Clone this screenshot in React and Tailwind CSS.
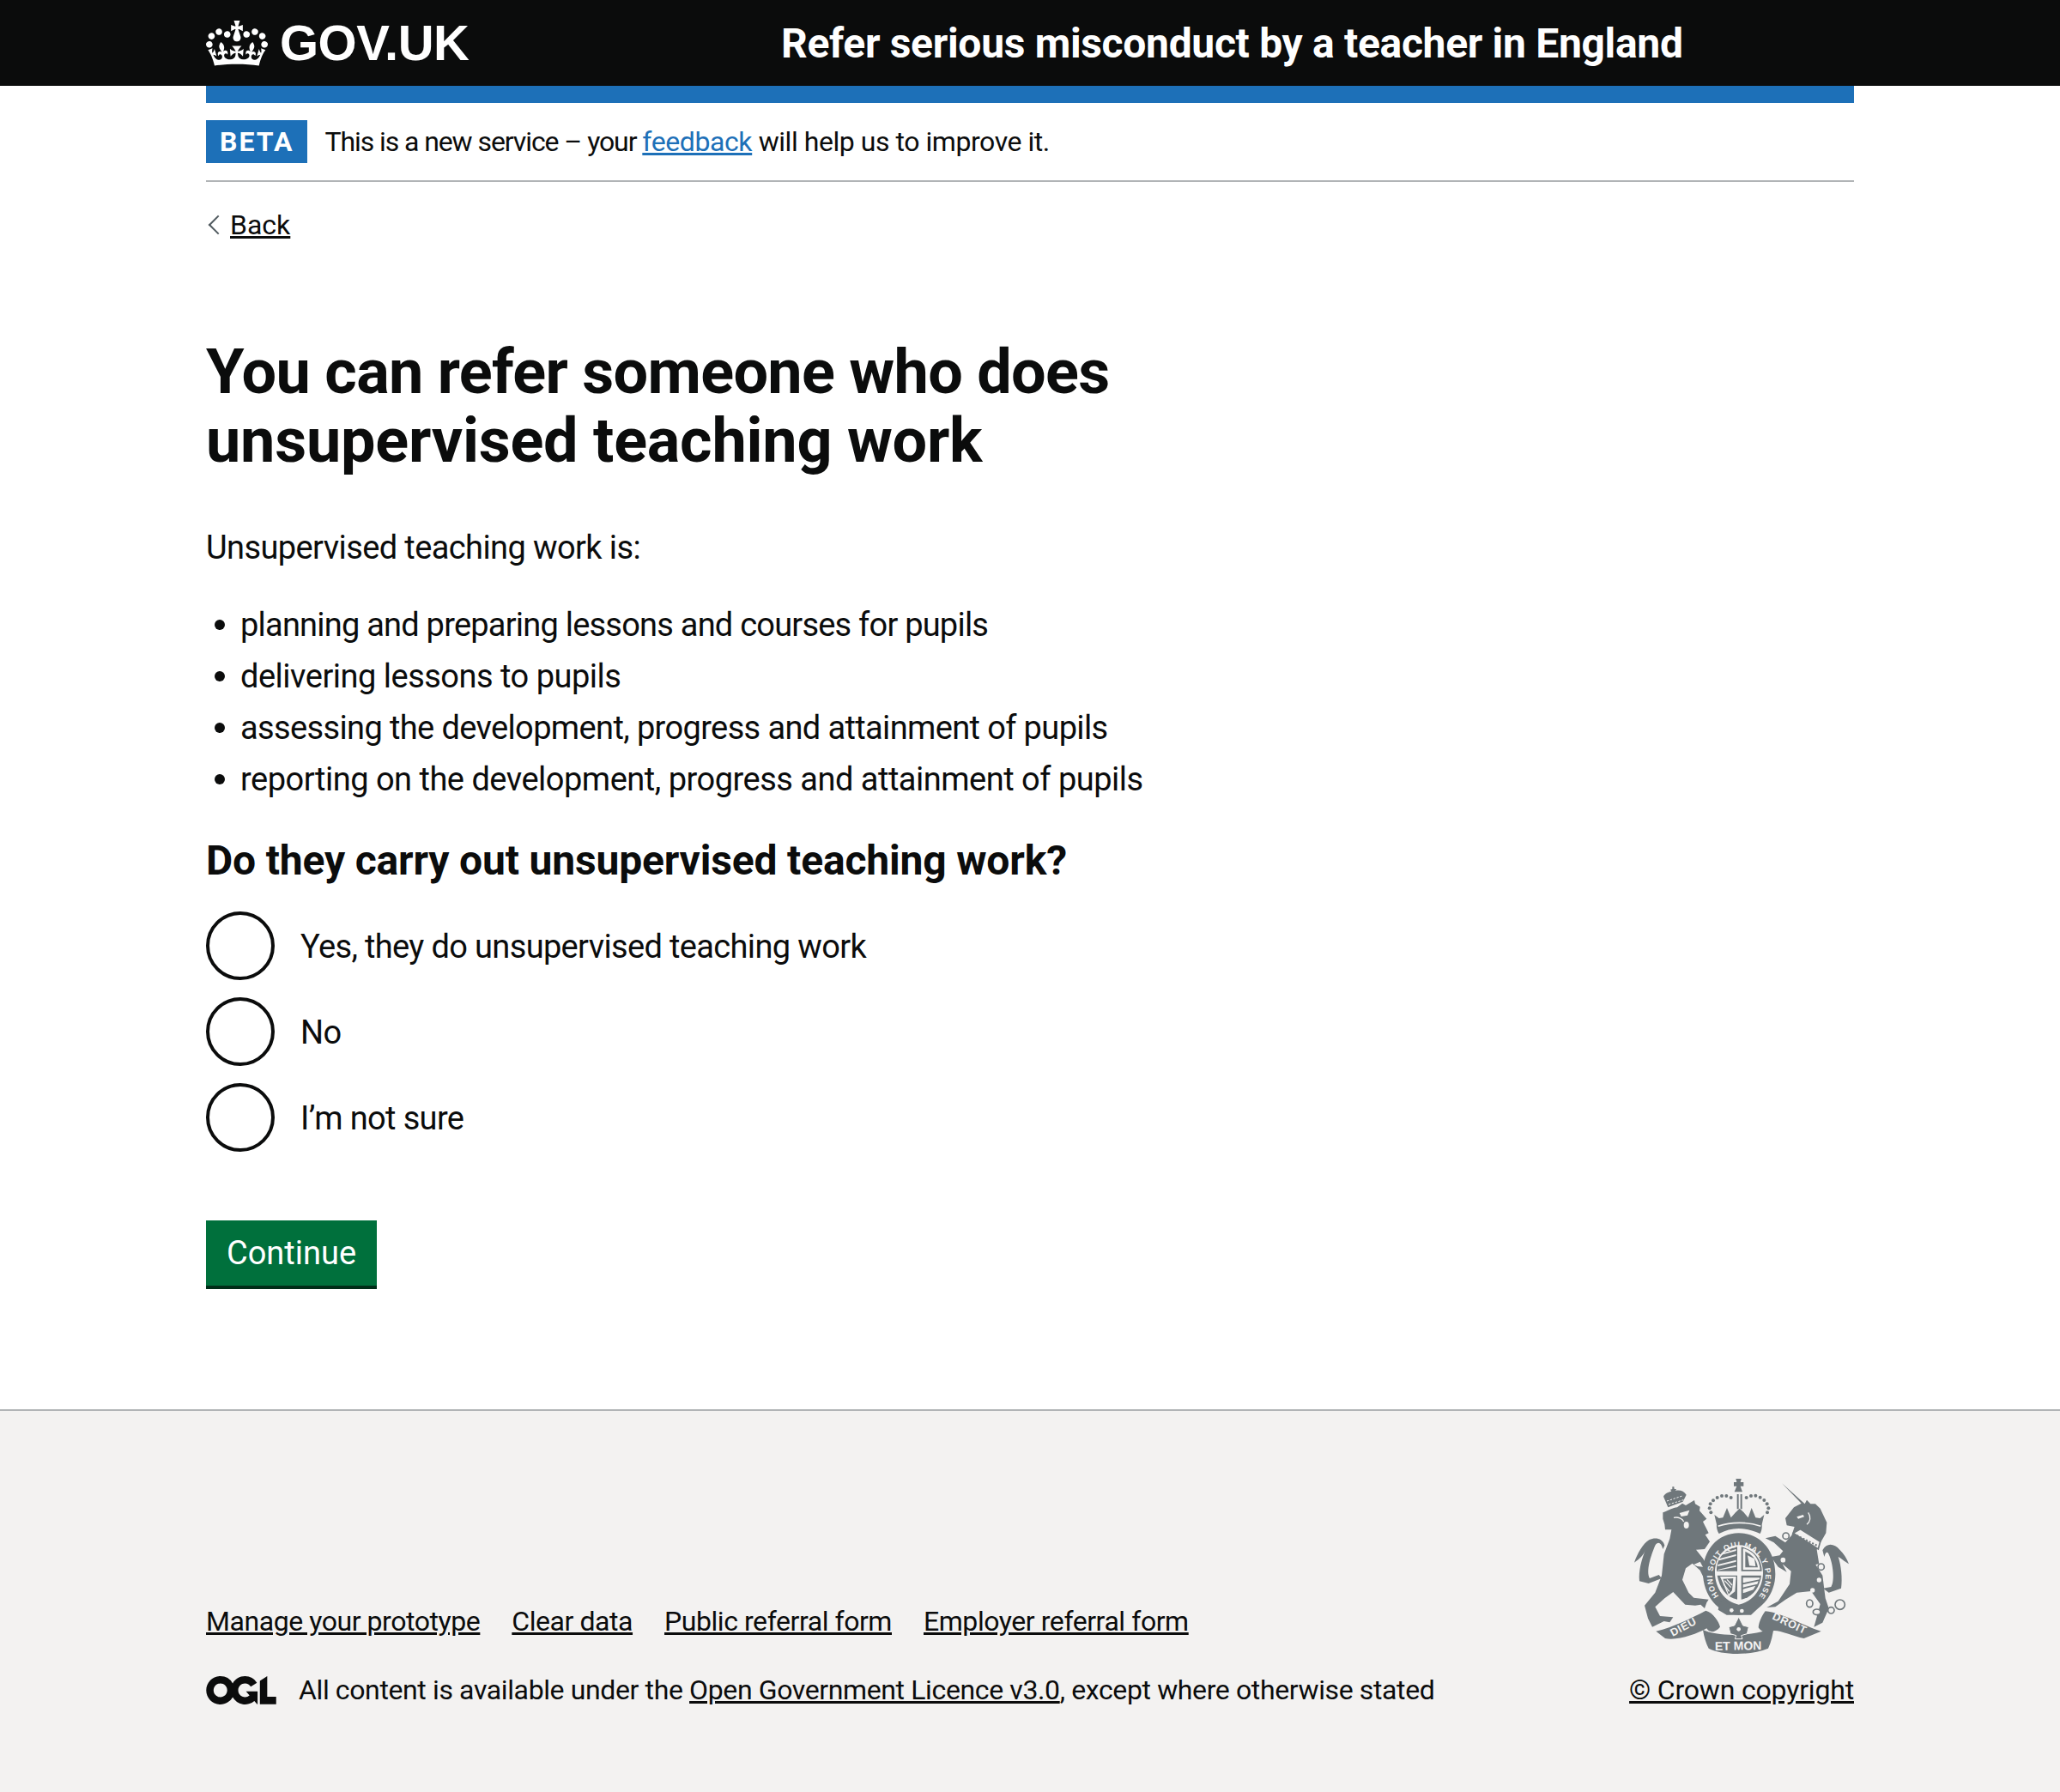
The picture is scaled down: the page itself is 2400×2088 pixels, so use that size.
const sans = "font-['Roboto',sans-serif]";

function Crown({ className }) {
  return (
    <svg viewBox="0 0 132 97" className={className} fill="currentColor">
      <path d="M25 30.2c3.5 1.5 7.7-.2 9.1-3.7 1.5-3.6-.2-7.8-3.9-9.2-3.6-1.4-7.6.3-9.1 3.9-1.4 3.5.3 7.5 3.9 9zM9 39.5c3.6 1.5 7.8-.2 9.2-3.7 1.5-3.6-.2-7.8-3.9-9.1-3.6-1.5-7.6.2-9.1 3.8-1.4 3.5.3 7.5 3.8 9zM4.4 57.2c3.5 1.5 7.7-.2 9.1-3.8 1.5-3.6-.2-7.7-3.9-9.1-3.5-1.5-7.6.3-9.1 3.8-1.4 3.5.3 7.6 3.9 9.1zm38.3-21.4c3.5 1.5 7.7-.2 9.1-3.8 1.5-3.6-.2-7.7-3.9-9.1-3.6-1.5-7.6.3-9.1 3.8-1.3 3.6.4 7.7 3.9 9.1zm64.4-5.6c-3.6 1.5-7.8-.2-9.1-3.7-1.5-3.6.2-7.8 3.8-9.2 3.6-1.4 7.7.3 9.2 3.9 1.3 3.5-.4 7.5-3.9 9zm15.9 9.3c-3.6 1.5-7.7-.2-9.1-3.7-1.5-3.6.2-7.8 3.7-9.1 3.6-1.5 7.7.2 9.2 3.8 1.5 3.5-.3 7.5-3.8 9zm4.7 17.7c-3.6 1.5-7.8-.2-9.2-3.8-1.5-3.6.2-7.7 3.9-9.1 3.6-1.5 7.7.3 9.2 3.8 1.3 3.5-.4 7.6-3.9 9.1zM89.3 35.8c-3.6 1.5-7.8-.2-9.2-3.8-1.4-3.6.2-7.7 3.9-9.1 3.6-1.5 7.7.3 9.2 3.8 1.4 3.6-.3 7.7-3.9 9.1zM69.7 17.7l8.9 4.7V9.3l-8.9 2.8c-.2-.3-.5-.6-.9-.9L72.4 0H59.6l3.6 11.2c-.3.3-.6.5-.9.9l-8.8-2.8v13.1l8.8-4.7c.3.3.6.7.9.9l-5 15.4v.1c-.2.8-.4 1.6-.4 2.4 0 4.1 3.1 7.5 7 8.1h.2c.3 0 .7.1 1 .1.4 0 .7 0 1-.1h.2c4-.6 7.1-4.1 7.1-8.1 0-.8-.1-1.7-.4-2.4V34l-5.1-15.4c.4-.2.7-.6 1-.9zM66 92.8c16.9 0 32.8 1.1 47.1 3.2 4-16.9 8.9-26.7 14-33.5l-9.6-3.4c1 4.9 1.1 7.2 0 10.2-1.5-1.4-3-4.3-4.2-8.7L108.6 76c2.8-2 5-3.2 7.5-3.3-4.4 9.4-10 11.9-13.6 11.2-4.3-.8-6.3-4.6-5.6-7.9 1-4.7 5.7-5.9 8-.5 4.3-8.7-3-11.4-7.6-8.8 7.1-7.2 7.9-13.5 2.1-21.1-8 6.1-8.1 12.3-4.5 20.8-4.7-5.4-12.1-2.5-9.5 6.2 3.4-5.2 7.9-2 7.2 3.1-.6 4.3-6.4 7.8-13.5 7.2-10.3-.9-10.9-8-11.2-13.8 2.5-.5 7.1 1.8 11 7.3L80.2 60c-4.1 4.4-8 5.3-12.3 5.4 1.4-4.4 8-11.6 8-11.6H55.5s6.4 7.2 7.9 11.6c-4.2-.1-8-1-12.3-5.4l1.4 16.4c3.9-5.5 8.5-7.7 10.9-7.3-.3 5.8-.9 12.8-11.1 13.8-7.2.6-12.9-2.9-13.5-7.2-.7-5 3.8-8.3 7.1-3.1 2.7-8.7-4.6-11.6-9.4-6.2 3.7-8.5 3.6-14.7-4.6-20.8-5.8 7.6-5 13.9 2.2 21.1-4.7-2.6-11.9.1-7.7 8.8 2.3-5.5 7.1-4.2 8.1.5.7 3.3-1.3 7.1-5.7 7.9-3.5.7-9-1.8-13.5-11.2 2.5.1 4.7 1.3 7.5 3.3l-4.7-15.4c-1.2 4.4-2.7 7.2-4.3 8.7-1.1-3-.9-5.3 0-10.2l-9.5 3.4c5 6.9 9.9 16.7 14 33.5 14.8-2.1 30.8-3.2 47.7-3.2z" />
    </svg>
  );
}

function Ogl({ className }) {
  return (
    <svg viewBox="0 0 483.2 195.7" className={className} fill="currentColor">
      <path d="M421.5 142.8V.1l-50.7 32.3v161.1h112.4v-50.7zm-122.3-9.6A47.12 47.12 0 0 1 221 97.8c0-26 21.1-47.1 47.1-47.1 16.7 0 31.4 8.7 39.7 21.8l42.7-27.2A97.63 97.63 0 0 0 268.1 0c-36.5 0-68.3 20.1-85.1 49.7A98 98 0 0 0 97.8 0C43.9 0 0 43.9 0 97.8s43.9 97.8 97.8 97.8c36.5 0 68.3-20.1 85.1-49.7a97.76 97.76 0 0 0 149.6 25.4l19.4 22.2h3v-87.8h-80l24.3 27.5zM97.8 145c-26 0-47.1-21.1-47.1-47.1s21.1-47.1 47.1-47.1 47.2 21 47.2 47S123.8 145 97.8 145" />
    </svg>
  );
}

// royal arms, traced by eye in the coordinates of the 3x crop
function Crest({ className }) {
  const dots = [
    [400, 190], [395, 175], [398, 160], [408, 148], [422, 138], [438, 132], [454, 132], [470, 138],
    [524, 138], [540, 132], [556, 131], [572, 137], [586, 147], [596, 160], [601, 175], [597, 190],
  ];
  return (
    <svg viewBox="0 0 960 720" className={className} fill="#6f777b">
      <defs>
        <path id="garter" d="M428 482 A 93 103 0 1 1 568 482" />
      </defs>
      {/* lion crown */}
      <path d="M250 172 L234 134 C240 122 252 118 262 116 L258 110 L265 108 L265 100 L271 100 L272 108 L279 108 L276 114 C292 110 306 116 314 128 L302 152 Z" />
      <path d="M246 150 L300 132 M252 162 L304 146" stroke="#f3f2f1" strokeWidth="3" strokeDasharray="7 5" fill="none" />
      {/* lion */}
      <path d="M232 190 C250 185 268 172 282 172 L300 158 L312 165 L342 147 L345 160 L362 170 L360 184 L385 212 L372 222 L392 262 L380 268 L396 292 L378 318 L348 320 L372 350 L392 385 L408 402 L402 430 L390 445 L378 425 L362 392 L335 368 L312 385 L300 425 L322 470 L340 488 L392 494 L385 505 L378 525 L364 512 L345 515 L310 512 L268 468 L238 490 L205 520 L222 552 L268 556 L256 574 L236 570 L195 590 L180 560 L168 515 L205 470 L228 410 L236 335 L256 282 L262 250 L240 250 L238 232 L232 212 Z" />
      <path d="M290 192 L325 182 L318 200 L296 204 Z" fill="#f3f2f1" />
      <ellipse cx="314" cy="234" rx="9" ry="12" fill="#f3f2f1" />
      <path d="M270 208 C285 205 300 210 305 222" stroke="#f3f2f1" strokeWidth="4" fill="none" />
      <path d="M340 372 L362 362 L372 380 L352 378 Z" fill="#f3f2f1" />
      <path d="M238 305 C232 280 205 275 185 285 C162 298 142 335 132 365 C150 352 165 340 172 318 C158 352 146 395 150 430 L182 438 L228 420 L218 408 L186 420 C172 395 190 340 205 305 C215 290 226 295 232 318 Z" />
      {/* royal crown */}
      <path d="M480 84 L490 84 L487 72 L506 72 L503 84 L514 84 L514 98 L503 98 L510 118 L482 118 L490 98 L480 98 Z" />
      <path d="M491 126 H497 V178 H491 Z M503 126 H509 V178 H503 Z" />
      <path d="M420 232 L412 198 L428 210 L442 208 L456 174 L470 208 L486 190 L500 176 L515 190 L530 208 L542 174 L556 208 L572 210 L586 198 L578 232 C580 250 572 264 572 264 C520 240 472 240 428 264 C428 264 418 250 420 232 Z" />
      <path d="M425 238 C470 222 530 222 574 238" stroke="#f3f2f1" strokeWidth="5" fill="none" />
      {dots.map(([x, y]) => (
        <circle key={x + "-" + y} cx={x} cy={y} r="6" />
      ))}
      {/* garter ring */}
      <path
        fillRule="evenodd"
        d="M497 262 C570 262 625 320 625 405 C625 480 570 545 497 548 C425 545 372 480 372 400 C372 320 425 262 497 262 Z M497 304 C448 304 414 348 414 400 C414 455 448 502 497 512 C548 502 582 455 582 400 C582 348 548 304 497 304 Z"
      />
      <path d="M430 505 L445 495 L470 520 L545 520 L560 505 L575 515 L540 548 L455 548 L425 530 Z" />
      <circle cx="472" cy="532" r="7" fill="#f3f2f1" />
      <circle cx="508" cy="534" r="7" fill="#f3f2f1" />
      {/* shield quarters */}
      <path d="M492 310 V395 H420 C418 352 448 318 492 310 Z" />
      <path d="M506 310 C548 318 578 352 578 395 H506 Z" />
      <path d="M422 410 H492 V494 C452 486 430 452 422 410 Z" />
      <path d="M506 410 H576 C570 452 546 486 506 494 Z" />
      <g fill="#f3f2f1">
        <path d="M428 352 L488 336 V342 L428 358 Z M424 372 L488 356 V362 L424 378 Z M424 390 L488 374 V380 L424 392 Z M440 332 L488 318 V324 L436 338 Z" />
        <path d="M512 316 C545 322 570 352 572 390 H512 Z M520 326 V382 H564 C560 354 543 336 520 326 Z" />
        <path d="M512 418 H570 V424 L512 436 Z M512 442 L566 430 L562 440 L512 452 Z M512 458 L556 446 L548 460 L512 472 Z" />
        <path d="M432 414 H488 L484 466 L462 484 Z" />
      </g>
      <path d="M528 340 L552 352 L556 378 L534 376 Z" fill="#f3f2f1" />
      <path d="M442 422 L478 420 L474 462 L462 476 Z" />
      <path d="M448 428 L470 452 M456 424 L474 444 M444 440 L464 466" stroke="#f3f2f1" strokeWidth="4" fill="none" />
      {/* garter letters */}
      <text fill="#f3f2f1" fontFamily="'Liberation Sans',sans-serif" fontWeight="700" fontSize="27">
        <textPath href="#garter" textLength="455" lengthAdjust="spacing">HONI SOIT QUI MAL Y PENSE</textPath>
      </text>
      {/* unicorn */}
      <path d="M648 88 L728 160 L735 146 L748 160 L765 160 L782 176 L805 225 L802 262 L785 292 L770 320 L778 370 L766 372 L790 410 L800 490 L812 525 L790 575 L760 590 L770 555 L782 510 L750 465 L700 470 L660 495 L625 520 L595 522 L635 500 L675 440 L680 395 L650 370 L665 398 L635 380 L610 345 L640 340 L652 325 L620 295 L590 280 L625 272 L660 295 L682 270 L692 240 L665 235 L660 210 L690 172 L716 158 Z" />
      <path d="M790 322 C805 295 830 298 850 320 C865 335 875 350 882 370 C865 360 855 350 845 345 C855 375 860 420 855 455 L812 470 L792 455 L820 450 C835 425 825 360 810 332 C805 325 800 330 796 345 Z" />
      <path d="M700 205 L722 198 L726 205 L705 212 Z" fill="#f3f2f1" />
      <path d="M740 190 C750 205 748 222 735 232" stroke="#f3f2f1" strokeWidth="4" fill="none" />
      <g fill="#f3f2f1" stroke="#6f777b" strokeWidth="5">
        <circle cx="662" cy="272" r="11" />
        <circle cx="652" cy="356" r="11" />
        <circle cx="785" cy="380" r="11" />
        <ellipse cx="745" cy="508" rx="11" ry="13" />
        <ellipse cx="770" cy="538" rx="13" ry="10" />
        <circle cx="820" cy="532" r="11" />
        <circle cx="851" cy="512" r="17" />
      </g>
      <circle cx="778" cy="426" r="8" fill="#f3f2f1" />
      <circle cx="755" cy="462" r="8" fill="#f3f2f1" />
      <path d="M688 262 L712 248 L782 292 L775 318 Z" fill="#f3f2f1" stroke="#6f777b" strokeWidth="5" />
      <path d="M700 270 L770 305" stroke="#6f777b" strokeWidth="6" strokeDasharray="6 6" fill="none" />
      {/* motto ribbon */}
      <path d="M208 605 C270 590 330 560 382 533 C408 540 428 572 432 590 C415 610 395 612 385 595 C350 615 280 640 240 630 Z" />
      <path d="M372 600 C420 625 560 625 620 590 C616 615 612 640 600 665 C540 690 440 690 392 665 C382 645 376 625 372 600 Z" />
      <path d="M566 592 C568 570 580 548 590 535 C650 540 730 590 785 605 L725 630 C680 620 630 595 610 605 C590 615 575 605 566 592 Z" />
      <path d="M497 555 L512 585 L532 590 L526 614 L506 620 L510 632 H484 L488 620 L468 614 L462 590 L482 585 Z" fill="#6f777b" stroke="#f3f2f1" strokeWidth="3" />
      <circle cx="497" cy="598" r="7" fill="#f3f2f1" />
      <g fill="#f3f2f1" fontFamily="'Liberation Sans',sans-serif" fontWeight="700" fontSize="38">
        <text x="266" y="624" letterSpacing="2" transform="rotate(-28 266 624)">DIEU</text>
        <text x="414" y="672" fontSize="42" transform="rotate(-1 414 672)">ET MON</text>
        <text x="612" y="562" letterSpacing="2" transform="rotate(25 612 562)">DROIT</text>
      </g>
    </svg>
  );
}

function Radio({ children }) {
  return (
    <label className="flex items-center h-[80px]">
      <span className="w-[80px] h-[80px] rounded-full border-4 border-[#0b0c0c] bg-white shrink-0" />
      <span className="ml-[30px] text-[38px] leading-[50px] mt-[2px] tracking-[-0.65px]">{children}</span>
    </label>
  );
}

const listItems = [
  { text: "planning and preparing lessons and courses for pupils", track: "tracking-[-0.78px]" },
  { text: "delivering lessons to pupils", track: "tracking-[-0.5px]" },
  { text: "assessing the development, progress and attainment of pupils", track: "tracking-[-0.63px]" },
  { text: "reporting on the development, progress and attainment of pupils", track: "tracking-[-0.5px]" },
];

export default function App() {
  return (
    <div className={`min-h-[2088px] flex flex-col bg-white text-[#0b0c0c] ${sans}`}>
      <header className="bg-[#0b0c0c] h-[100px] text-white">
        <div className="w-[1920px] mx-auto flex items-center h-full">
          <div className="w-1/3 flex items-center gap-[14px]">
            <Crown className="w-[72px] h-[53px]" />
            <span className="font-['Liberation_Sans',sans-serif] font-bold text-[58px] leading-none tracking-[-0.5px]">GOV.UK</span>
          </div>
          <div className="w-2/3 pl-[30px] font-bold text-[48px] leading-none tracking-[-0.32px] mt-[1px]">
            Refer serious misconduct by a teacher in England
          </div>
        </div>
      </header>

      <div className="w-[1920px] mx-auto flex-1">
        <div className="h-[20px] bg-[#1d70b8]" />
        <div className="flex items-center py-[20px] border-b-2 border-[#b1b4b6]">
          <strong className="bg-[#1d70b8] text-white h-[50px] px-[16px] flex items-center text-[32px] font-bold tracking-[2px]">BETA</strong>
          <span className="ml-[20px] text-[32px] leading-[50px] tracking-[-0.45px]">
            <span className="tracking-[-1.08px]">This is a new service – your </span>
            <a className="text-[#1d70b8] underline tracking-[-0.4px]">feedback</a> will help us to improve it.
          </span>
        </div>

        <div className="mt-[30px] flex items-center text-[32px] leading-[40px]">
          <span className="w-[16px] h-[16px] ml-[6px] mr-[6px] border-l-2 border-b-2 border-[#505a5f] rotate-45" />
          <a className="underline">Back</a>
        </div>

        <main className="pt-[112px] w-[1400px]">
          <h1 className="text-[72px] leading-[80px] font-bold mb-[59px] tracking-[-0.7px]">
            You can refer someone who does<br />
            <span className="tracking-[-0.24px]">unsupervised teaching work</span>
          </h1>
          <p className="text-[38px] leading-[50px] mb-[40px] tracking-[-0.6px]">Unsupervised teaching work is:</p>
          <ul className="text-[38px] leading-[50px] mb-[40px] flex flex-col gap-[10px]">
            {listItems.map((item) => (
              <li key={item.text} className={`flex items-center ${item.track}`}>
                <span className="w-[12px] h-[12px] rounded-full bg-[#0b0c0c] ml-[10px] mr-[18px]" />
                {item.text}
              </li>
            ))}
          </ul>
          <h2 className="text-[48px] leading-[60px] font-bold mb-[29px] tracking-[-0.17px]">Do they carry out unsupervised teaching work?</h2>
          <div className="flex flex-col gap-[20px]">
            <Radio>Yes, they do unsupervised teaching work</Radio>
            <Radio>No</Radio>
            <Radio>I’m not sure</Radio>
          </div>
          <button className="mt-[80px] h-[76px] w-[199px] bg-[#00703c] text-white text-[38px] leading-none shadow-[0_4px_0_#002d18] block">
            Continue
          </button>
        </main>
      </div>

      <footer className="mt-[138px] bg-[#f3f2f1] border-t-2 border-[#b1b4b6] h-[446px]">
        <div className="w-[1920px] mx-auto flex items-end h-full pb-[99px] text-[32px] leading-[40px]">
          <div className="flex-1">
            <div className="flex gap-[37px] mb-[40px] tracking-[-0.44px]">
              <a className="underline">Manage your prototype</a>
              <a className="underline">Clear data</a>
              <a className="underline">Public referral form</a>
              <a className="underline">Employer referral form</a>
            </div>
            <div className="flex items-center">
              <Ogl className="w-[82px] h-[33px] mr-[26px]" />
              <span className="tracking-[-0.38px]">
                All content is available under the <a className="underline">Open Government Licence v3.0</a>, except where otherwise stated
              </span>
            </div>
          </div>
          <div className="flex flex-col items-end">
            <Crest className="w-[320px] h-[240px] mr-[-20px] mb-[10px]" />
            <a className="underline tracking-[-0.18px]">© Crown copyright</a>
          </div>
        </div>
      </footer>
    </div>
  );
}
